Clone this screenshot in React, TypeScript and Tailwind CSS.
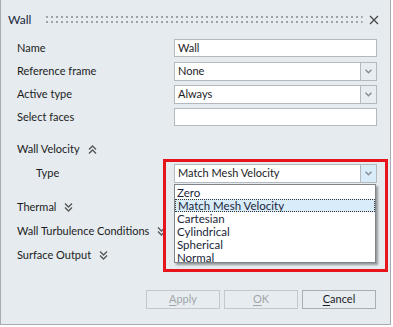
import React from "react";

const font = { fontFamily: 'Lato, "Liberation Sans", Arial, sans-serif' };

function DoubleChevron({ up }: { up?: boolean }) {
  return (
    <svg width="9" height="9" viewBox="0 0 9 9" className="shrink-0">
      {up ? (
        <g fill="none" stroke="#555" strokeWidth="1.3">
          <polyline points="1,4.5 4.5,1 8,4.5" />
          <polyline points="1,8.5 4.5,5 8,8.5" />
        </g>
      ) : (
        <g fill="none" stroke="#555" strokeWidth="1.3">
          <polyline points="1,0.5 4.5,4 8,0.5" />
          <polyline points="1,4.5 4.5,8 8,4.5" />
        </g>
      )}
    </svg>
  );
}

function ComboArrow() {
  return (
    <svg width="7" height="5" viewBox="0 0 7 5">
      <polyline points="0.5,0.8 3.5,3.8 6.5,0.8" fill="none" stroke="#8a8f94" strokeWidth="1.5" />
    </svg>
  );
}

function TextBox({ value }: { value: string }) {
  return (
    <div className="h-[18px] w-[203px] border border-[#b4b9be] bg-white px-[3px] flex items-center text-[11px] text-[#1c1c1c]">
      {value}
    </div>
  );
}

function Combo({ value, active }: { value: string; active?: boolean }) {
  return (
    <div className="h-[19px] w-[203px] flex">
      <div className="flex-1 border border-[#b4b9be] bg-white px-[3px] flex items-center text-[11px] text-[#1c1c1c]">
        {value}
      </div>
      <div
        className={
          "w-[16px] border border-l-0 border-[#b4b9be] flex items-center justify-center " +
          (active ? "bg-[#d9ecf9]" : "bg-[#e8edf1]")
        }
      >
        <ComboArrow />
      </div>
    </div>
  );
}

function Row({ label, children }: { label: string; children: React.ReactNode }) {
  return (
    <div className="flex items-center h-[18px]">
      <div className="w-[157px] text-[11px] text-[#1c1c1c]">{label}</div>
      {children}
    </div>
  );
}

function Section({ label, up }: { label: string; up?: boolean }) {
  return (
    <div className="flex items-center gap-[8px] h-[16px] text-[11px] text-[#1c1c1c]">
      <span>{label}</span>
      <DoubleChevron up={up} />
    </div>
  );
}

function Btn({ label, u, disabled }: { label: string; u: string; disabled?: boolean }) {
  const rest = label.slice(1);
  return (
    <div
      className={
        "w-[74px] h-[19px] border flex items-center justify-center text-[11px] bg-[#e6ecf0] " +
        (disabled ? "border-[#c3c8cc] text-[#a3a7ab]" : "border-[#a9aeb3] text-[#1c1c1c]")
      }
    >
      <span>
        <span className="underline underline-offset-2">{u}</span>
        {rest}
      </span>
    </div>
  );
}

export default function App() {
  const items = ["Zero", "Match Mesh Velocity", "Cartesian", "Cylindrical", "Spherical", "Normal"];
  return (
    <div className="w-[393px] h-[327px] bg-white" style={font}>
      <div className="relative w-[391px] h-[325px] bg-[#e5ebef] border-l border-r border-b border-[#a7acb1] flex flex-col">
        {/* title */}
        <div className="h-[37px] flex items-center pl-[7px] pr-[11px] pt-[2px]">
          <span className="text-[12px] text-[#1a1f3a]">Wall</span>
          <svg className="ml-[15px] flex-1 h-[8px]" height="8">
            <defs>
              <pattern id="dots" width="5" height="5" patternUnits="userSpaceOnUse">
                <rect x="0" y="0" width="2" height="2" fill="#9ea3a8" />
              </pattern>
            </defs>
            <rect x="0" y="0" width="100%" height="7" fill="url(#dots)" />
          </svg>
          <svg width="10" height="10" viewBox="0 0 10 10" className="ml-[6px]">
            <path d="M1 1 L9 9 M9 1 L1 9" stroke="#444" strokeWidth="1.2" />
          </svg>
        </div>

        {/* form */}
        <div className="pl-[16px] pt-[2px] flex flex-col gap-[5px]">
          <Row label="Name">
            <TextBox value="Wall" />
          </Row>
          <Row label="Reference frame">
            <Combo value="None" />
          </Row>
          <Row label="Active type">
            <Combo value="Always" />
          </Row>
          <Row label="Select faces">
            <TextBox value="" />
          </Row>
        </div>

        <div className="pl-[16px] mt-[15px]">
          <Section label="Wall Velocity" up />
        </div>
        <div className="flex items-center mt-[6px] h-[20px]">
          <div className="w-[173px] pl-[35px] text-[11px] text-[#1c1c1c]">Type</div>
          <div className="relative">
            <Combo value="Match Mesh Velocity" active />
            {/* dropdown list */}
            <div className="absolute left-0 top-[20px] w-[202px] h-[79px] bg-white border border-[#7f8489] shadow-[2px_2px_2px_rgba(0,0,0,0.35)] flex flex-col pt-[1px] text-[11.5px] leading-[13px] text-[#1a1f3a] z-10">
              {items.map((it, i) => (
                <div
                  key={it}
                  className={
                    "h-[13px] px-[2px] " +
                    (i === 1 ? "bg-[#d9ecf9] border border-dotted border-[#333] leading-[11px] px-[1px]" : "")
                  }
                >
                  {it}
                </div>
              ))}
            </div>
          </div>
        </div>
        {/* red annotation box */}
        <div className="absolute left-[162px] top-[159px] w-[225px] h-[113px] border-[3px] border-[#e8141c] z-20 pointer-events-none" />

        <div className="pl-[16px] mt-[16px] flex flex-col gap-[8px]">
          <Section label="Thermal" />
          <Section label="Wall Turbulence Conditions" />
          <Section label="Surface Output" />
        </div>

        <div className="mt-auto mb-[15px] pr-[14px] flex justify-end gap-[4px]">
          <Btn label="Apply" u="A" disabled />
          <Btn label="OK" u="O" disabled />
          <Btn label="Cancel" u="C" />
        </div>
      </div>
    </div>
  );
}
